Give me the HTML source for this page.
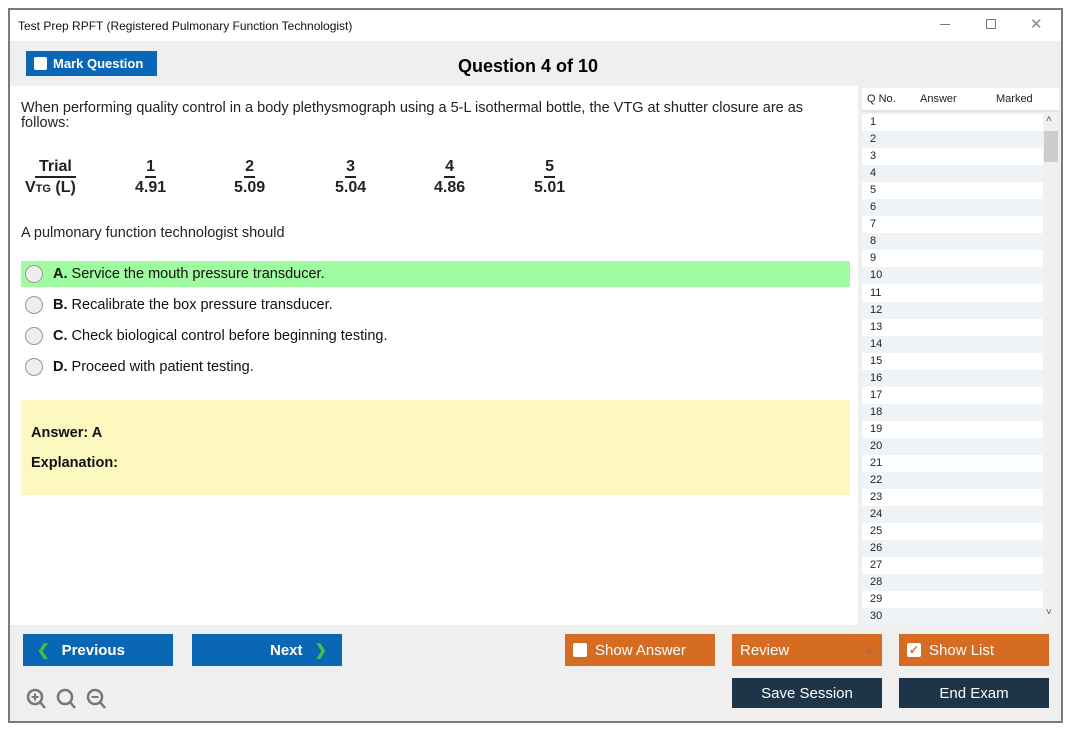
<!DOCTYPE html>
<html><head><meta charset="utf-8"><style>
*{margin:0;padding:0;box-sizing:border-box}
body{width:1075px;height:735px;background:#fff;font-family:"Liberation Sans",Arial,sans-serif;position:relative;overflow:hidden}
.a{position:absolute}
.win{left:8px;top:8px;width:1055px;height:715px;border:2px solid #7a7a7a;background:#fff}
.btn{position:absolute;color:#fff;font-size:15px;display:flex;align-items:center;font-family:"Liberation Sans",sans-serif}
.blue{background:#0a67b5}.org{background:#d66b22}.dark{background:#1d3449}
.cb{width:14px;height:14px;background:#fff;border-radius:2px;display:inline-block;margin-right:8px}
.opt{position:absolute;left:21px;width:829px;height:26px;font-size:14.5px;display:flex;align-items:center;color:#111}
.rad{width:18px;height:18px;border-radius:50%;border:1.5px solid #999;background:#eee;margin:0 10px 0 4px}
.row{position:absolute;left:862px;width:181px;height:17px;font-size:11px;padding-left:8px;line-height:17px;color:#222}
.frac{position:absolute;top:157px;text-align:center;font-weight:bold;font-size:16px;line-height:19px;color:#222}
.frac span{display:block}
.frac .t{border-bottom:2px solid #222}
.hd{position:absolute;top:93px;font-size:11px;color:#222}
</style></head><body>
<div class="a win"></div>
<div class="a" style="left:18px;top:19px;font-size:12px;color:#111">Test Prep RPFT (Registered Pulmonary Function Technologist)</div>
<div class="a" style="left:940px;top:24px;width:10px;height:1px;background:#777"></div>
<div class="a" style="left:986px;top:19px;width:10px;height:10px;border:1px solid #777"></div>
<div class="a" style="left:1030px;top:15px;font-size:15px;color:#888">✕</div>
<div class="a" style="left:10px;top:41px;width:1051px;height:45px;background:#efefef"></div>
<div class="btn blue" style="left:26px;top:51px;width:131px;height:25px;font-size:13px;font-weight:bold;padding-left:8px"><span class="cb" style="width:13px;height:13px;margin-right:6px"></span>Mark Question</div>
<div class="a" style="left:458px;top:56px;font-size:18px;font-weight:bold;color:#000">Question 4 of 10</div>
<div class="a" style="left:21px;top:101px;font-size:14.5px;line-height:15px;color:#222;width:820px">When performing quality control in a body plethysmograph using a 5-L isothermal bottle, the VTG at shutter closure are as follows:</div>
<div class="frac" style="left:25px"><span class="t" style="margin-left:10px">Trial</span><span>V<small style="font-size:11px">TG</small> (L)</span></div>
<div class="frac" style="left:135px"><span class="t" style="margin:0 10px">1</span><span>4.91</span></div>
<div class="frac" style="left:234px"><span class="t" style="margin:0 10px">2</span><span>5.09</span></div>
<div class="frac" style="left:335px"><span class="t" style="margin:0 10px">3</span><span>5.04</span></div>
<div class="frac" style="left:434px"><span class="t" style="margin:0 10px">4</span><span>4.86</span></div>
<div class="frac" style="left:534px"><span class="t" style="margin:0 10px">5</span><span>5.01</span></div>
<div class="a" style="left:21px;top:225px;font-size:14.5px;color:#222">A pulmonary function technologist should</div>
<div class="opt" style="top:261px;background:#a0fca0"><div class="rad"></div><b>A.</b>&nbsp;Service the mouth pressure transducer.</div>
<div class="opt" style="top:292px"><div class="rad"></div><b>B.</b>&nbsp;Recalibrate the box pressure transducer.</div>
<div class="opt" style="top:323px"><div class="rad"></div><b>C.</b>&nbsp;Check biological control before beginning testing.</div>
<div class="opt" style="top:354px"><div class="rad"></div><b>D.</b>&nbsp;Proceed with patient testing.</div>
<div class="a" style="left:21px;top:400px;width:829px;height:95px;background:#fdf8c0"></div>
<div class="a" style="left:31px;top:425px;font-size:14.5px;font-weight:bold;color:#111">Answer: A</div>
<div class="a" style="left:31px;top:455px;font-size:14.5px;font-weight:bold;color:#111">Explanation:</div>
<div class="a" style="left:858px;top:86px;width:203px;height:539px;background:#efefef"></div>
<div class="a" style="left:862px;top:88px;width:197px;height:24px;background:#fff;border-bottom:2px solid #e3e3e3"></div>
<div class="hd" style="left:867px">Q No.</div>
<div class="hd" style="left:920px">Answer</div>
<div class="hd" style="left:996px">Marked</div>
<div class="a" style="left:862px;top:114px;width:197px;height:511px;background:#fff"></div>
<div id="rows"></div>
<div class="a" style="left:1043px;top:114px;width:16px;height:511px;background:#f0f0f0"></div>
<div class="a" style="left:1044px;top:131px;width:14px;height:31px;background:#cdcdcd"></div>
<div class="a" style="left:1046px;top:114px;font-size:10px;color:#555">˄</div>
<div class="a" style="left:1046px;top:607px;font-size:10px;color:#555">˅</div>
<div class="a" style="left:10px;top:625px;width:1051px;height:96px;background:#efefef"></div>
<div class="btn blue" style="left:23px;top:634px;width:150px;height:32px;font-weight:bold;padding-left:14px"><span style="color:#3ec43e;margin-right:12px">❮</span>Previous</div>
<div class="btn blue" style="left:192px;top:634px;width:150px;height:32px;font-weight:bold;padding-left:78px">Next<span style="color:#3ec43e;margin-left:12px">❯</span></div>
<div class="btn org" style="left:565px;top:634px;width:150px;height:32px;padding-left:8px"><span class="cb"></span>Show Answer</div>
<div class="btn org" style="left:732px;top:634px;width:150px;height:32px;padding-left:8px">Review<span style="margin-left:auto;margin-right:8px;color:#b0684a;font-size:10px">▲</span></div>
<div class="btn org" style="left:899px;top:634px;width:150px;height:32px;padding-left:8px"><span class="cb" style="color:#d66b22;font-size:12px;line-height:14px;text-align:center;font-weight:bold">✓</span>Show List</div>
<div class="btn dark" style="left:732px;top:678px;width:150px;height:30px;justify-content:center">Save Session</div>
<div class="btn dark" style="left:899px;top:678px;width:150px;height:30px;justify-content:center">End Exam</div>
<svg class="a" style="left:26px;top:688px" width="84" height="24" viewBox="0 0 84 24" fill="none" stroke="#777" stroke-width="2.5">
<circle cx="9" cy="9" r="7"/><line x1="14" y1="14" x2="19" y2="20"/><line x1="5.5" y1="9" x2="12.5" y2="9" stroke-width="2"/><line x1="9" y1="5.5" x2="9" y2="12.5" stroke-width="2"/>
<circle cx="39" cy="9" r="7"/><line x1="44" y1="14" x2="49" y2="20"/>
<circle cx="69" cy="9" r="7"/><line x1="74" y1="14" x2="79" y2="20"/><line x1="65.5" y1="9" x2="72.5" y2="9" stroke-width="2"/>
</svg>
<script>
var h='';for(var i=1;i<=30;i++){h+='<div class="row" style="top:'+(114+(i-1)*17.05)+'px;background:'+(i%2?'#fff':'#eef3f8')+'">'+i+'</div>';}
document.getElementById('rows').innerHTML=h;
</script>
</body></html>
